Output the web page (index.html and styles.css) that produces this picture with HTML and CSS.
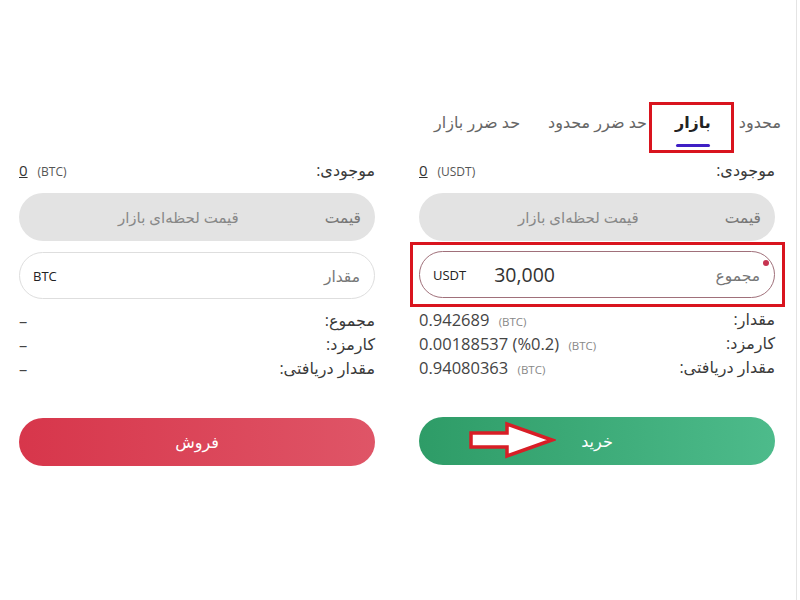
FILE: index.html
```html
<!DOCTYPE html>
<html lang="fa">
<head>
    <meta charset="UTF-8">
    <meta name="viewport" content="width=device-width, initial-scale=1.0">
    <title>Market Order</title>
    <link rel="stylesheet" href="styles.css">
</head>
<body>
<div class="page">

    <div class="tabs" dir="rtl">
        <div class="tab">محدود</div>
        <div class="tab active">بازار<span class="mark mark-tab"></span></div>
        <div class="tab">حد ضرر محدود</div>
        <div class="tab">حد ضرر بازار</div>
    </div>

    <div class="trade" dir="rtl">

        <!-- buy side -->
        <div class="side">
            <div class="balance">
                <span class="balance-label">موجودی:</span>
                <span class="balance-value" dir="ltr"><u>0</u> <small>(USDT)</small></span>
            </div>
            <div class="field field-gray">
                <span class="field-label">قیمت</span>
                <span class="field-hint">قیمت لحظه‌ای بازار</span>
            </div>
            <div class="field field-focus">
                <span class="field-label">مجموع</span>
                <span class="field-input" dir="ltr">30,000</span>
                <span class="field-unit">USDT</span>
                <span class="dot"></span>
                <span class="mark mark-field"></span>
            </div>
            <div class="info">
                <div class="info-row">
                    <span>مقدار:</span>
                    <span class="info-value" dir="ltr">0.942689 <small>(BTC)</small></span>
                </div>
                <div class="info-row">
                    <span>کارمزد:</span>
                    <span class="info-value" dir="ltr">0.00188537 (%0.2) <small>(BTC)</small></span>
                </div>
                <div class="info-row">
                    <span>مقدار دریافتی:</span>
                    <span class="info-value" dir="ltr">0.94080363 <small>(BTC)</small></span>
                </div>
            </div>
            <button class="btn btn-buy">خرید
                <svg class="arrow" width="88" height="38" viewBox="0 0 88 38">
                    <path d="M3 12 H39 V3 L84 19 L39 35 V26 H3 Z" fill="#fff" stroke="#d81e26" stroke-width="3.5"/>
                </svg>
            </button>
        </div>

        <!-- sell side -->
        <div class="side">
            <div class="balance">
                <span class="balance-label">موجودی:</span>
                <span class="balance-value" dir="ltr"><u>0</u> <small>(BTC)</small></span>
            </div>
            <div class="field field-gray">
                <span class="field-label">قیمت</span>
                <span class="field-hint">قیمت لحظه‌ای بازار</span>
            </div>
            <div class="field field-plain">
                <span class="field-label">مقدار</span>
                <span class="field-input" dir="ltr"></span>
                <span class="field-unit">BTC</span>
            </div>
            <div class="info">
                <div class="info-row">
                    <span>مجموع:</span>
                    <span class="info-value">–</span>
                </div>
                <div class="info-row">
                    <span>کارمزد:</span>
                    <span class="info-value">–</span>
                </div>
                <div class="info-row">
                    <span>مقدار دریافتی:</span>
                    <span class="info-value">–</span>
                </div>
            </div>
            <button class="btn btn-sell">فروش</button>
        </div>

    </div>
</div>
</body>
</html>
```

FILE: styles.css
```css
body {
    margin: 0;
    font-family: "Open Sans", "DejaVu Sans", sans-serif;
    color: #333;
    background: #fff;
}
.page {
    width: 797px;
    height: 600px;
    padding-top: 102px;
    border-right: 1px solid #e4e4e4;
    box-sizing: border-box;
}

/* tabs */
.tabs {
    display: flex;
    align-items: flex-start;
    height: 51px;
    padding-right: 1px;
}
.tab {
    position: relative;
    padding: 0 14px;
    font-size: 16px;
    color: #666;
    line-height: 40px;
}
.tab.active {
    color: #222;
    font-weight: bold;
}
.tab.active::after {
    content: "";
    position: absolute;
    left: 15px;
    right: 15px;
    bottom: -5px;
    height: 3px;
    background: #3f1fc4;
    border-radius: 2px;
}

/* red annotation boxes */
.mark {
    position: absolute;
    border: 3.5px solid #d9141e;
    pointer-events: none;
}
.mark-tab {
    left: -12px;
    right: -9px;
    top: 0;
    bottom: -11px;
}
.mark-field {
    left: -10px;
    right: -11px;
    top: -10px;
    bottom: -10px;
}

/* columns */
.trade {
    display: grid;
    grid-template-columns: 356px 356px;
    column-gap: 44px;
    margin: 5px 21px 0 20px;
}
.side {
    display: flex;
    flex-direction: column;
}
.balance {
    display: flex;
    justify-content: space-between;
    align-items: center;
    height: 24px;
    margin-bottom: 11px;
}
.balance-label {
    font-size: 16px;
    color: #3a3a3a;
}
.balance-value {
    font-size: 15px;
    color: #333;
}
.balance-value small {
    font-size: 12px;
    color: #555;
    margin-left: 6px;
}

/* fields */
.field {
    position: relative;
    display: flex;
    align-items: center;
    height: 48px;
    border-radius: 24px;
    padding: 0 14px 0 13px;
    box-sizing: border-box;
}
.field-label {
    color: #777;
    font-size: 15.5px;
}
.field-gray {
    background: #e3e3e3;
}
.field-hint {
    flex: 1;
    text-align: center;
    color: #888;
    font-size: 15px;
}
.field-focus,
.field-plain {
    height: 47px;
    background: #fff;
}
.field-focus {
    margin-top: 10px;
    border: 1.5px solid #a0707a;
}
.field-plain {
    margin-top: 11px;
    border: 1px solid #dedede;
}
.field-input {
    flex: 1;
    text-align: left;
    font-size: 19.5px;
    color: #333;
    padding-left: 28px;
}
.field-unit {
    font-size: 13px;
    color: #222;
}
.dot {
    position: absolute;
    right: 5px;
    top: 8px;
    width: 6px;
    height: 6px;
    border-radius: 50%;
    background: #c63350;
}

/* summary rows */
.info {
    margin-top: 9px;
}
.info-row {
    display: flex;
    justify-content: space-between;
    align-items: center;
    height: 24px;
    font-size: 16px;
    color: #3a3a3a;
}
.info-value {
    color: #444;
    font-size: 16.5px;
}
.info-value small {
    font-size: 11.5px;
    color: #888;
    margin-left: 5px;
}

/* buttons */
.btn {
    position: relative;
    margin-top: 38px;
    height: 48px;
    border: none;
    border-radius: 24px;
    color: #fff;
    font-family: inherit;
    font-size: 16px;
}
.btn-buy {
    background: linear-gradient(to right, #2e9c67, #4dbb8b);
}
.btn-sell {
    background: linear-gradient(to right, #d7364b, #df5567);
}
.arrow {
    position: absolute;
    left: 49px;
    top: 4px;
}
```
